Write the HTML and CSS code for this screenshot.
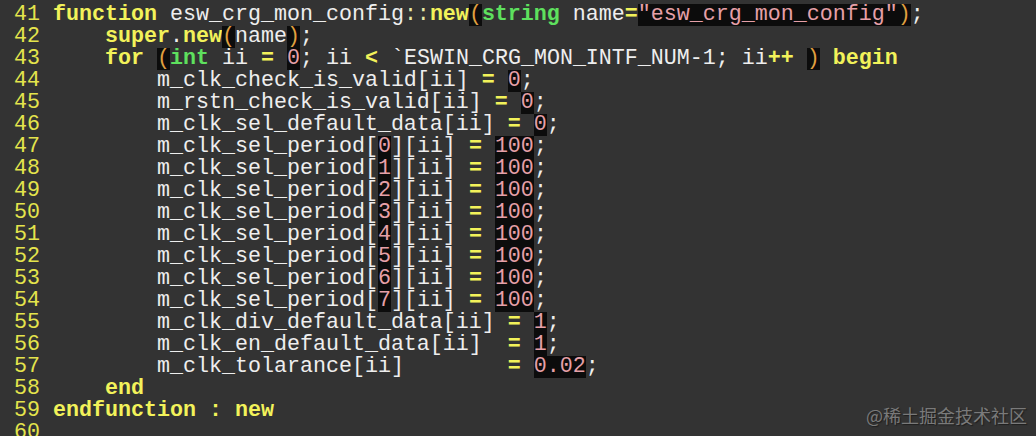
FILE: index.html
```html
<!DOCTYPE html>
<html>
<head>
<meta charset="utf-8">
<link rel="stylesheet" href="styles.css">
</head>
<body>
<div class="editor">
<pre class="code"><span class="ln"> 41 </span><span class="kw">function</span> esw_crg_mon_config<span class="op">::</span><span class="kw">new</span><span class="hl par">(</span><span class="ty">string</span> name<span class="kw">=</span><span class="hl str">"esw_crg_mon_config"<span class="par">)</span></span>;
<span class="ln"> 42 </span>    <span class="kw">super</span>.<span class="kw">new</span><span class="hl par">(</span>name<span class="hl par">)</span>;
<span class="ln"> 43 </span>    <span class="kw">for</span> <span class="hl par">(</span><span class="ty">int</span> ii <span class="kw">=</span> <span class="hl num">0</span>; ii <span class="kw">&lt;</span> `ESWIN_CRG_MON_INTF_NUM-1; ii<span class="kw">++</span> <span class="hl par">)</span> <span class="kw">begin</span>
<span class="ln"> 44 </span>        m_clk_check_is_valid[ii] <span class="kw">=</span> <span class="hl num">0</span>;
<span class="ln"> 45 </span>        m_rstn_check_is_valid[ii] <span class="kw">=</span> <span class="hl num">0</span>;
<span class="ln"> 46 </span>        m_clk_sel_default_data[ii] <span class="kw">=</span> <span class="hl num">0</span>;
<span class="ln"> 47 </span>        m_clk_sel_period[<span class="hl num">0</span>][ii] <span class="kw">=</span> <span class="hl num">100</span>;
<span class="ln"> 48 </span>        m_clk_sel_period[<span class="hl num">1</span>][ii] <span class="kw">=</span> <span class="hl num">100</span>;
<span class="ln"> 49 </span>        m_clk_sel_period[<span class="hl num">2</span>][ii] <span class="kw">=</span> <span class="hl num">100</span>;
<span class="ln"> 50 </span>        m_clk_sel_period[<span class="hl num">3</span>][ii] <span class="kw">=</span> <span class="hl num">100</span>;
<span class="ln"> 51 </span>        m_clk_sel_period[<span class="hl num">4</span>][ii] <span class="kw">=</span> <span class="hl num">100</span>;
<span class="ln"> 52 </span>        m_clk_sel_period[<span class="hl num">5</span>][ii] <span class="kw">=</span> <span class="hl num">100</span>;
<span class="ln"> 53 </span>        m_clk_sel_period[<span class="hl num">6</span>][ii] <span class="kw">=</span> <span class="hl num">100</span>;
<span class="ln"> 54 </span>        m_clk_sel_period[<span class="hl num">7</span>][ii] <span class="kw">=</span> <span class="hl num">100</span>;
<span class="ln"> 55 </span>        m_clk_div_default_data[ii] <span class="kw">=</span> <span class="hl num">1</span>;
<span class="ln"> 56 </span>        m_clk_en_default_data[ii]  <span class="kw">=</span> <span class="hl num">1</span>;
<span class="ln"> 57 </span>        m_clk_tolarance[ii]        <span class="kw">=</span> <span class="hl num">0.02</span>;
<span class="ln"> 58 </span>    <span class="kw">end</span>
<span class="ln"> 59 </span><span class="kw">endfunction</span> <span class="kw">:</span> <span class="kw">new</span>
<span class="ln"> 60 </span></pre>
<div class="watermark">@稀土掘金技术社区</div>
</div>
</body>
</html>
```

FILE: styles.css
```css
html, body {
  margin: 0;
  padding: 0;
  background: #333333;
}

.editor {
  position: relative;
  width: 1036px;
  height: 436px;
  overflow: hidden;
  background: #333333;
}

.code {
  margin: 0;
  padding: 4px 0 0 1px;
  font-family: "Courier New", "Nimbus Mono PS", "Nimbus Mono L", "FreeMono", "Liberation Mono", monospace;
  font-size: 21.67px;
  line-height: 22px;
  color: #eeeeee;
  white-space: pre;
}

.ln {
  color: #e4e44c;
}

.kw {
  color: #f2f25a;
  font-weight: bold;
}

.op {
  color: #e8e8a8;
}

.ty {
  color: #5ee05e;
  font-weight: bold;
}

.hl {
  display: inline-block;
  line-height: 22px;
  vertical-align: top;
  background: #0c0c0c;
}

.par {
  color: #e0a040;
}

.num,
.str {
  color: #e6a0a8;
}

.watermark {
  position: absolute;
  right: 9px;
  bottom: 10px;
  font-family: "Noto Sans CJK SC", sans-serif;
  font-size: 18px;
  line-height: 22px;
  color: #7a7a7a;
  text-shadow: 1px 1px 1px #1e1e1e;
}
```
